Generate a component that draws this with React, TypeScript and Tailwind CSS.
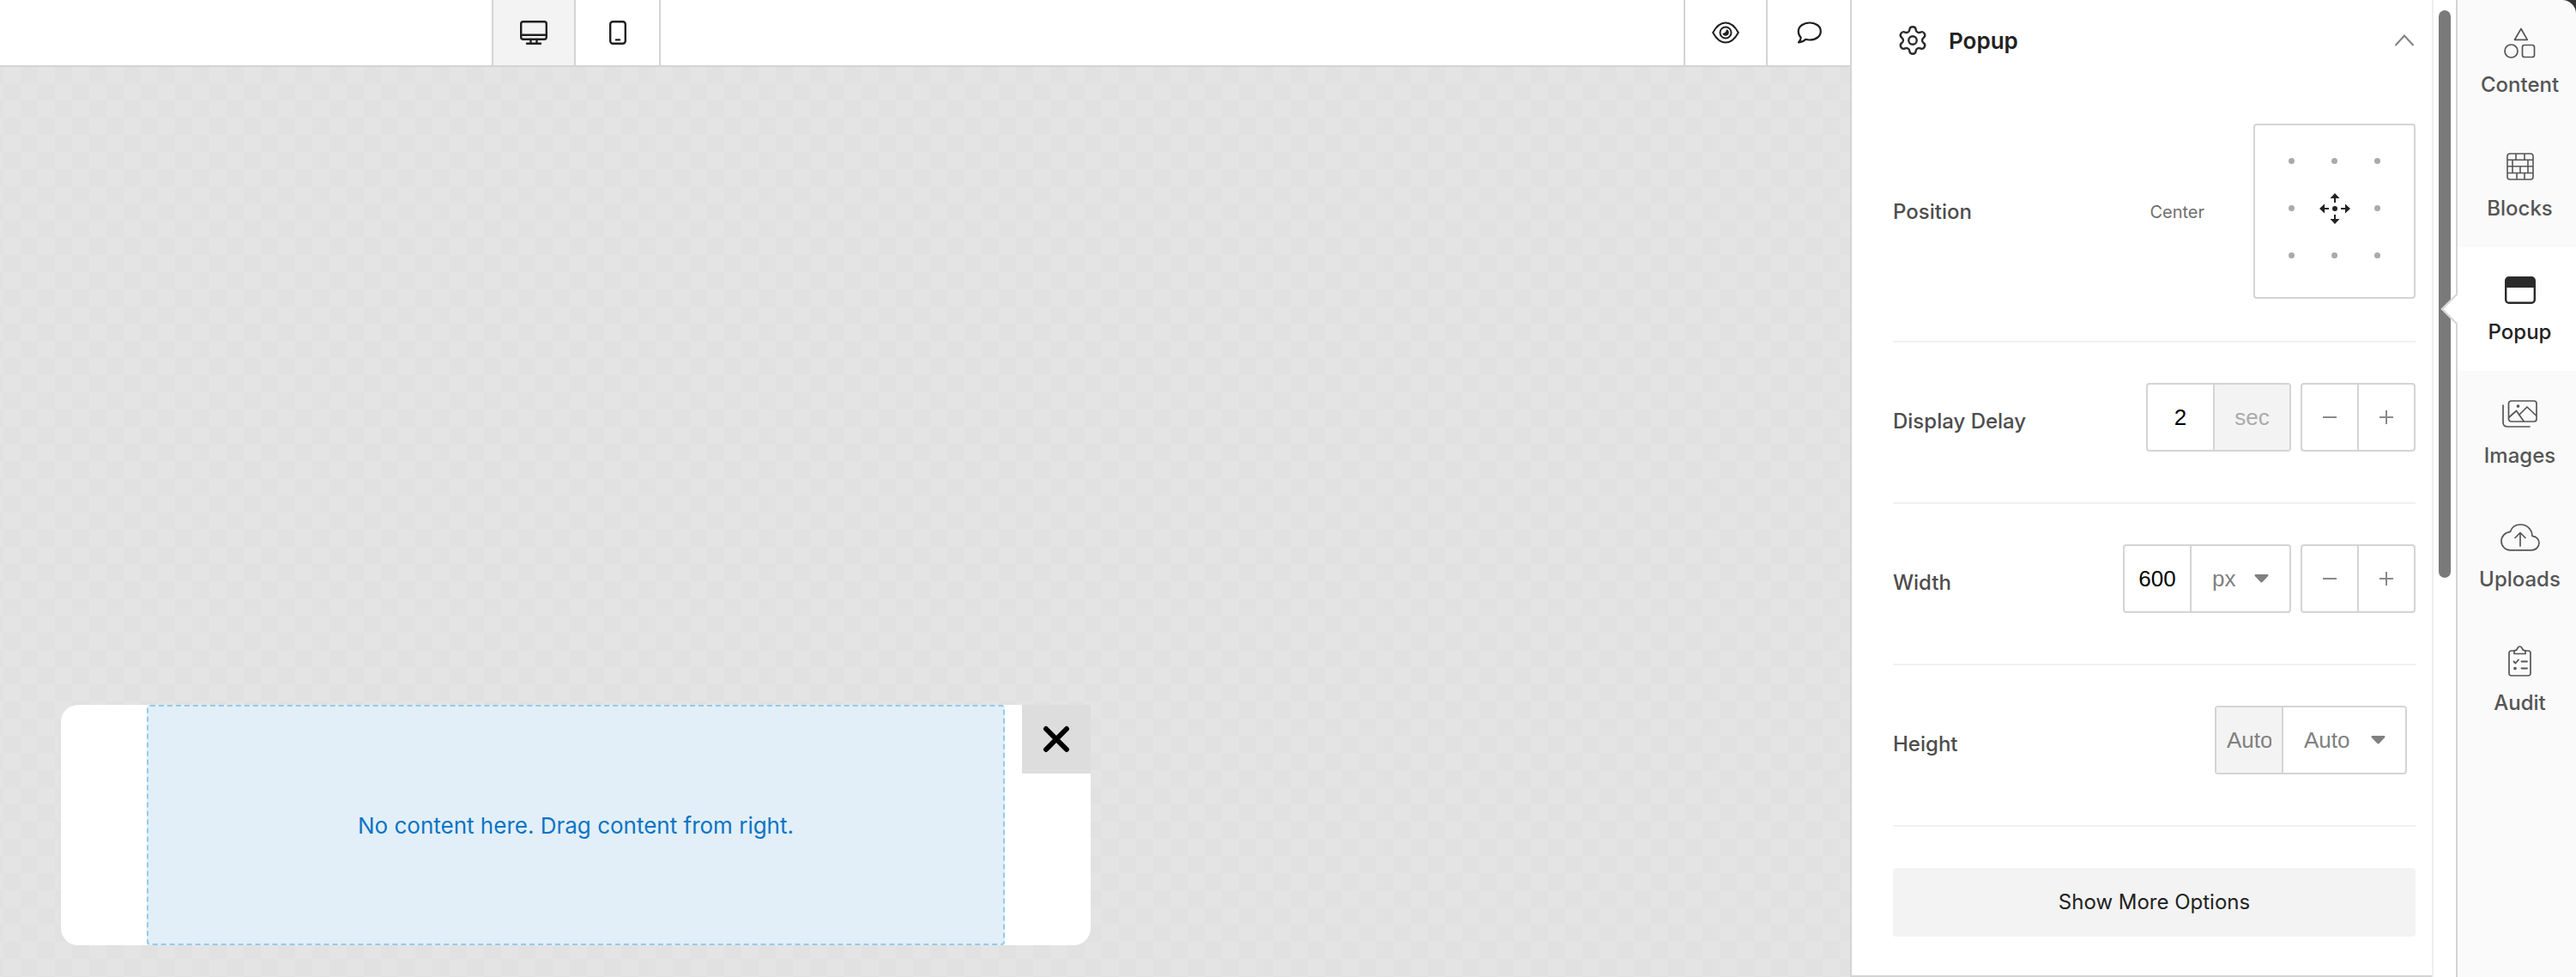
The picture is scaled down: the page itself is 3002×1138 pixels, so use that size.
import * as React from "react";
import { Settings } from "lucide-react";

const tabs = [
  { label: "Content", icon: <ContentIcon /> },
  { label: "Blocks", icon: <BlocksIcon /> },
  { label: "Popup", icon: <PopupIcon />, active: true },
  { label: "Images", icon: <ImagesIcon /> },
  { label: "Uploads", icon: <UploadsIcon /> },
  { label: "Audit", icon: <AuditIcon /> },
];

function DesktopIcon() {
  return (
    <svg width="32" height="28" viewBox="0 0 32 28" fill="none" stroke="currentColor" strokeWidth="2.4" strokeLinecap="round" strokeLinejoin="round">
      <rect x="1.2" y="1.2" width="29.6" height="20.6" rx="2.5" />
      <path d="M1.2 16.8h29.6M12.5 22v4.6M19.5 22v4.6M8 26.8h16" />
    </svg>
  );
}

function PhoneIcon() {
  return (
    <svg width="20" height="28" viewBox="0 0 20 28" fill="none" stroke="currentColor" strokeWidth="2.4" strokeLinecap="round">
      <rect x="1.2" y="1.2" width="17.6" height="25.6" rx="3" />
      <path d="M8 22.4h4" />
    </svg>
  );
}

function EyeIcon() {
  return (
    <svg width="32" height="26" viewBox="0 0 32 26" fill="none" stroke="currentColor" strokeWidth="2">
      <path d="M1.2 13C5 6 10 1.500 16 1.500S27 6 30.800 13C27 20 22 24.500 16 24.500S5 20 1.200 13Z" strokeLinejoin="round" />
      <circle cx="16" cy="13" r="6.500" />
      <path d="M17 9.300a3.800 3.800 0 1 1-4.700 4.500c2.600.2 4.500-1.800 4.700-4.500Z" fill="currentColor" stroke="none" />
    </svg>
  );
}

function CommentIcon() {
  return (
    <svg width="29" height="26" viewBox="0 0 29 26" fill="none" stroke="currentColor" strokeWidth="2.2" strokeLinejoin="round">
      <path d="M15 1.500c7 0 12.800 4 12.800 10s-5.800 10-12.800 10c-1.700 0-3.200-.2-4.600-.7-1.800 1.900-4.400 3.300-8.400 3.700 1.700-1.900 2.600-3.700 2.700-5.800C2.900 16.800 1.800 14.300 1.800 11.500c0-6 6.200-10 13.200-10Z" />
    </svg>
  );
}

function ContentIcon() {
  return (
    <svg width="37" height="36" viewBox="0 0 37 36" fill="none" stroke="#555" strokeWidth="1.7" strokeLinejoin="round">
      <path d="M20 1.500 27.300 14.300H12.500Z" />
      <circle cx="8.500" cy="27.500" r="7.500" />
      <rect x="21.500" y="20.500" width="14" height="14" rx="2.500" />
    </svg>
  );
}

function BlocksIcon() {
  return (
    <svg width="32" height="32" viewBox="0 0 32 32" fill="none" stroke="#555" strokeWidth="1.600" strokeLinejoin="round">
      <rect x="1" y="1" width="30" height="30" rx="3" />
      <path d="M1 8.200h30M1 15.800h30M1 23.500h30M11 1v7.200M21 1v7.200M7 8.200v7.600M25 8.200v7.600M16 15.800v7.700M7 15.800v7.700M25 15.800v7.700M12 23.500V31M21 23.500V31" />
    </svg>
  );
}

function PopupIcon() {
  return (
    <svg width="36" height="32" viewBox="0 0 36 32" fill="none">
      <rect x="1.200" y="1.200" width="33.600" height="29.600" rx="3.500" stroke="#2b2b2b" strokeWidth="2.400" />
      <path d="M1.200 4.700a3.500 3.500 0 0 1 3.500-3.500h26.600a3.500 3.500 0 0 1 3.500 3.500v8.300H1.200Z" fill="#2b2b2b" />
    </svg>
  );
}

function ImagesIcon() {
  return (
    <svg width="41" height="32" viewBox="0 0 41 32" fill="none" stroke="#555" strokeWidth="1.700" strokeLinejoin="round" strokeLinecap="round">
      <rect x="7.500" y="1" width="32.500" height="24" rx="3" />
      <path d="M1 6v19.500C1 28.800 3 31 6 31h26" />
      <path d="M8 20l8.500-7.500L25 24.500M20 17l9-9 10.500 10" />
      <circle cx="18.500" cy="7" r="1" fill="#555" />
    </svg>
  );
}

function UploadsIcon() {
  return (
    <svg width="46" height="32" viewBox="0 0 46 32" fill="none" stroke="#555" strokeWidth="1.700" strokeLinejoin="round" strokeLinecap="round">
      <path d="M11 30.800h25c5 0 9-3.400 9-8.200 0-4.500-3.500-8-8-8.200C36.800 6.800 31 1 23.500 1 17.500 1 13 4.300 11.500 9.300 5.500 9.800 1 14.800 1 20.300c0 5.800 4.500 10.500 10 10.500Z" />
      <path d="M23 26V11M17 16.500 23 10.500 29 16.500" />
    </svg>
  );
}

function AuditIcon() {
  return (
    <svg width="27" height="36" viewBox="0 0 27 36" fill="none" stroke="#555" strokeWidth="1.700" strokeLinejoin="round" strokeLinecap="round">
      <path d="M7 6H3.500A2.500 2.500 0 0 0 1 8.500v24A2.500 2.500 0 0 0 3.500 35h20a2.500 2.500 0 0 0 2.500-2.500v-24A2.500 2.500 0 0 0 23.500 6H20" />
      <path d="M7 9.500V5.800c2 0 3-.6 3.600-2.200C11.300 1.800 12.300 1 13.500 1s2.200.8 2.900 2.600c.6 1.600 1.600 2.200 3.600 2.200v3.700Z" />
      <path d="M6.500 18.500l2 2 3.500-4M15.500 18.500H22M15.500 26.500H22" strokeWidth="1.800" />
      <circle cx="8" cy="26.500" r="1" fill="#555" />
    </svg>
  );
}

function MoveIcon() {
  return (
    <svg width="38" height="38" viewBox="0 0 38 38" fill="#222" stroke="none">
      <circle cx="19" cy="19" r="3" />
      <path d="M19 1l5.500 6h-4.500v5h-2V7h-4.500ZM19 37l5.500-6h-4.500v-5h-2v5h-4.500ZM1 19l6-5.500v4.500h5v2H7v4.500ZM37 19l-6-5.500v4.500h-5v2h5v4.500Z" />
    </svg>
  );
}

function Caret() {
  return (
    <svg width="17" height="10" viewBox="0 0 18 11" fill="#808080">
      <path d="M1.500 0h15c1.200 0 1.800 1.300 1 2.200L10.200 10c-.6.700-1.800.700-2.400 0L.5 2.200C-.3 1.300.3 0 1.500 0Z" />
    </svg>
  );
}

function Stepper() {
  return (
    <div className="flex h-[80px] w-[134px] rounded-[4px] border-2 border-[#d4d4d4]">
      <div className="flex flex-1 items-center justify-center border-r-2 border-[#d4d4d4]">
        <svg width="16" height="2"><path d="M0 1h16" stroke="#8a8a8a" strokeWidth="2" /></svg>
      </div>
      <div className="flex flex-1 items-center justify-center">
        <svg width="16" height="16"><path d="M0 8h16M8 0v16" stroke="#8a8a8a" strokeWidth="2" /></svg>
      </div>
    </div>
  );
}

function Row({ label, children }: { label: string; children: React.ReactNode }) {
  return (
    <div className="flex h-[188px] items-start justify-between border-b-2 border-[#f0f0f0] pt-[47px]">
      <div className="flex h-[80px] items-center pt-[10px] text-[24px] font-medium text-[#4d4d4d]">{label}</div>
      {children}
    </div>
  );
}

export default function App() {
  const arial = "font-['Liberation_Sans',Arial,sans-serif]";

  return (
    <div className="flex h-[1138px] w-[3002px] overflow-hidden bg-[#333] font-['Inter',sans-serif]">
      {/* canvas + toolbar */}
      <div className="flex w-[2158px] flex-col border-r-2 border-[#d4d4d4] bg-white">
        <div className="flex h-[78px] shrink-0 border-b-2 border-[#d4d4d4] pl-[573px] text-[#1f1f1f]">
          <div className="flex w-[98px] items-center justify-center border-x-2 border-[#d4d4d4] bg-[#f3f3f3]">
            <DesktopIcon />
          </div>
          <div className="flex w-[99px] items-center justify-center border-r-2 border-[#d4d4d4]">
            <PhoneIcon />
          </div>
          <div className="flex-1" />
          <div className="flex w-[98px] items-center justify-center border-x-2 border-[#d4d4d4]">
            <EyeIcon />
          </div>
          <div className="flex w-[96px] items-center justify-center">
            <CommentIcon />
          </div>
        </div>

        <div className="flex flex-1 items-end bg-[conic-gradient(#e1e1e1_25%,#e4e4e4_0_50%,#e1e1e1_0_75%,#e4e4e4_0)] bg-[length:40px_40px] bg-[position:4px_-1px] pb-[37px] pl-[71px]">
          <div className="relative flex h-[280px] w-[1200px] justify-center rounded-[20px] bg-white">
            <div className="flex w-[1000px] items-center justify-center rounded-[4px] border-2 border-dashed border-[#93cbeb] bg-[#e2eff8] text-[26px] text-[#0a74c4]">
              No content here. Drag content from right.
            </div>
            <div className="absolute right-0 top-0 flex h-[80px] w-[80px] items-center justify-center bg-[#dddddd]">
              <svg width="32" height="32" viewBox="0 0 32 32" fill="none" stroke="#000" strokeWidth="6" strokeLinecap="round">
                <path d="M4 4l24 24M28 4 4 28" />
              </svg>
            </div>
          </div>
        </div>
      </div>

      {/* settings panel */}
      <div className="flex h-full w-[676px] flex-col border-b-2 border-[#d4d4d4] bg-white pl-[48px] pr-[19px]">
        <div className="flex h-[94px] shrink-0 items-center">
          <Settings className="ml-[4px] text-[#2b2b2b]" size={38} strokeWidth={1.5} />
          <span className="ml-[23px] text-[26px] font-semibold text-[#222]">Popup</span>
          <svg className="ml-auto mr-[1px]" width="24" height="14" viewBox="0 0 24 14" fill="none" stroke="#808080" strokeWidth="2">
            <path d="M1.500 13 12 1.500 22.500 13" />
          </svg>
        </div>

        <div className="flex h-[305px] shrink-0 items-center border-b-2 border-[#f0f0f0]">
          <span className="pt-[2px] text-[24px] font-medium text-[#4d4d4d]">Position</span>
          <span className="ml-auto mr-[57px] pt-[2px] text-[20px] text-[#6f6f6f]">Center</span>
          <div className="flex h-[204px] w-[189px] items-center justify-center rounded-[4px] border-2 border-[#d4d4d4] pb-[6px]">
            <div className="grid w-[150px] grid-cols-3">
              {[0, 1, 2, 3, 4, 5, 6, 7, 8].map((i) => (
                <div key={i} className="flex h-[55px] items-center justify-center">
                  {i === 4 ? <MoveIcon /> : <div className="h-[7px] w-[7px] rounded-full bg-[#aaaaaa]" />}
                </div>
              ))}
            </div>
          </div>
        </div>

        <Row label="Display Delay">
          <div className="flex gap-[11px]">
            <div className="flex h-[80px] w-[169px] rounded-[4px] border-2 border-[#d4d4d4]">
              <div className={`flex w-[78px] items-center justify-center border-r-2 border-[#d4d4d4] text-[26px] text-black ${arial}`}>2</div>
              <div className={`flex flex-1 items-center justify-center bg-[#f3f3f3] text-[26px] text-[#aaaaaa] ${arial}`}>sec</div>
            </div>
            <Stepper />
          </div>
        </Row>

        <Row label="Width">
          <div className="flex gap-[11px]">
            <div className="flex h-[80px] w-[196px] rounded-[4px] border-2 border-[#d4d4d4]">
              <div className={`flex w-[78px] items-center justify-center border-r-2 border-[#d4d4d4] text-[26px] text-black ${arial}`}>600</div>
              <div className={`flex flex-1 items-center pl-[24px] text-[26px] text-[#808080] ${arial}`}>
                px
                <span className="ml-[22px]"><Caret /></span>
              </div>
            </div>
            <Stepper />
          </div>
        </Row>

        <Row label="Height">
          <div className="mr-[10px] flex h-[80px] w-[224px] rounded-[4px] border-2 border-[#d4d4d4]">
            <div className={`flex w-[78px] items-center border-r-2 border-[#d4d4d4] bg-[#f3f3f3] pl-[12px] text-[26px] text-[#808080] ${arial}`}>
              <span className="w-[52px] overflow-hidden">Auto</span>
            </div>
            <div className={`flex flex-1 items-center pl-[24px] text-[26px] text-[#808080] ${arial}`}>
              Auto
              <span className="ml-[24px]"><Caret /></span>
            </div>
          </div>
        </Row>

        <button className="mt-[48px] h-[80px] shrink-0 rounded-[4px] bg-[#f3f3f3] text-[24px] text-[#222]">
          Show More Options
        </button>
      </div>

      {/* scrollbar */}
      <div className="flex w-[30px] justify-center border-x-2 border-l-[#eeeeee] border-r-[#d4d4d4] bg-white pt-[12px]">
        <div className="h-[661px] w-[14px] rounded-[7px] bg-[#7a7a7a]" />
      </div>

      {/* tab rail */}
      <div className="w-[138px] rounded-tr-[16px] bg-[#fafafa]">
        {tabs.map((tab) => (
          <div
            key={tab.label}
            className={
              tab.active
                ? "relative flex h-[144px] flex-col items-center bg-white pl-[7px] text-[#222]"
                : "relative flex h-[144px] flex-col items-center pl-[7px] text-[#555]"
            }
          >
            {tab.active && (
              <div className="absolute left-[-1px] top-[59px] h-[26px] w-[26px] -translate-x-1/2 rotate-45 border-b-2 border-l-2 border-[#d4d4d4] bg-white" />
            )}
            <div className="flex h-[80px] w-full items-center justify-center pt-[20px]">{tab.icon}</div>
            <div className="mt-[5px] text-[24px] font-medium leading-[28px]">{tab.label}</div>
          </div>
        ))}
      </div>
    </div>
  );
}
